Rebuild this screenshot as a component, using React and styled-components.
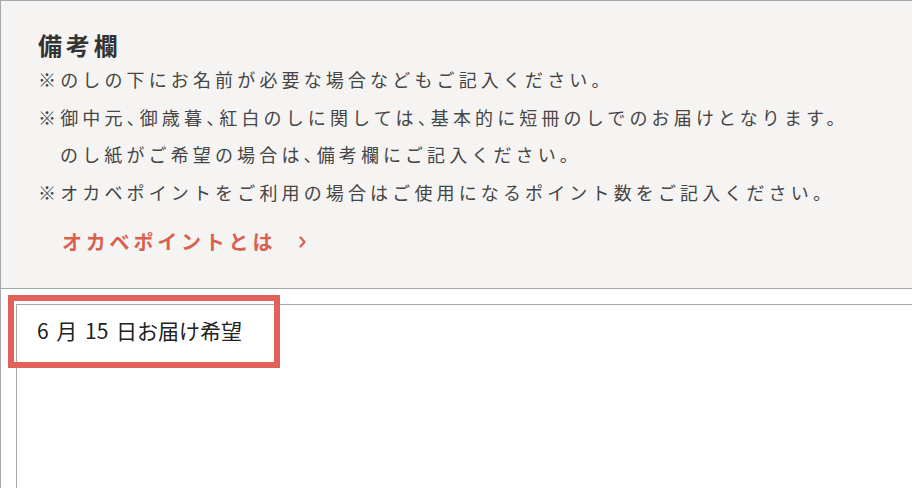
import styled, { createGlobalStyle } from "styled-components";

const GlobalStyle = createGlobalStyle`
  body {
    margin: 0;
    overflow: hidden;
    background: #fff;
    font-family: "Noto Sans CJK JP", "Noto Sans", sans-serif;
  }
`;

const Wrapper = styled.div`
  position: relative;
  width: 960px;
  min-height: 488px;
  border-top: 1px solid #a8a8a8;
  border-left: 1px solid #a8a8a8;
`;

const Panel = styled.section`
  background-color: #f5f4f2;
  border-bottom: 1px solid #a8a8a8;
  padding: 28px 0 31px 37px;
`;

const Title = styled.h2`
  margin: 0;
  font-size: 24px;
  line-height: 32px;
  font-weight: 700;
  letter-spacing: 0.16em;
  color: #333;
`;

const Notes = styled.div`
  font-size: 18px;
  line-height: 37.5px;
  letter-spacing: 0.23em;
  color: #454545;
`;

const Note = styled.p`
  margin: 0;
  padding-left: ${(p) => (p.$indent ? "22px" : "0")};
`;

const Half = styled.span`
  font-feature-settings: "halt";
`;

const PointLink = styled.a`
  display: flex;
  align-items: center;
  gap: 22px;
  margin: 16px 0 0 24px;
  font-size: 20px;
  line-height: 30px;
  font-weight: 700;
  letter-spacing: 0.19em;
  color: #d9604f;
  text-decoration: none;
  cursor: pointer;
`;

const Entry = styled.div`
  padding: 15px 0 0 15px;
`;

const Memo = styled.textarea`
  display: block;
  box-sizing: border-box;
  width: 100%;
  height: 220px;
  border: 1px solid #a8a8a8;
  border-right: none;
  padding: 10px 20px;
  font-family: "Noto Sans CJK JP", "Noto Sans", sans-serif;
  font-size: 21px;
  line-height: 30px;
  word-spacing: 3px;
  color: #222;
  background: #fff;
  resize: none;
  outline: none;
`;

const Highlight = styled.div`
  position: absolute;
  left: 7px;
  top: 294px;
  width: 272px;
  height: 73px;
  box-sizing: border-box;
  border: 6px solid #e0625a;
  pointer-events: none;
`;

export default function App() {
  return (
    <Wrapper>
      <GlobalStyle />
      <Panel>
        <Title>備考欄</Title>
        <Notes>
          <Note>※のしの下にお名前が必要な場合などもご記入ください。</Note>
          <Note>
            ※御中元<Half>、</Half>御歳暮<Half>、</Half>紅白のしに関しては
            <Half>、</Half>基本的に短冊のしでのお届けとなります。
          </Note>
          <Note $indent>
            のし紙がご希望の場合は<Half>、</Half>備考欄にご記入ください。
          </Note>
          <Note>
            ※オカベポイントをご利用の場合はご使用になるポイント数をご記入ください。
          </Note>
        </Notes>
        <PointLink>
          オカベポイントとは
          <svg width="9" height="14" viewBox="0 0 9 14">
            <path
              d="M2.5 2.5 L6.5 7 L2.5 11.5"
              fill="none"
              stroke="#d9604f"
              strokeWidth="2.2"
              strokeLinecap="round"
              strokeLinejoin="round"
            />
          </svg>
        </PointLink>
      </Panel>
      <Entry>
        <Memo defaultValue="6 月 15 日お届け希望" />
      </Entry>
      <Highlight />
    </Wrapper>
  );
}
